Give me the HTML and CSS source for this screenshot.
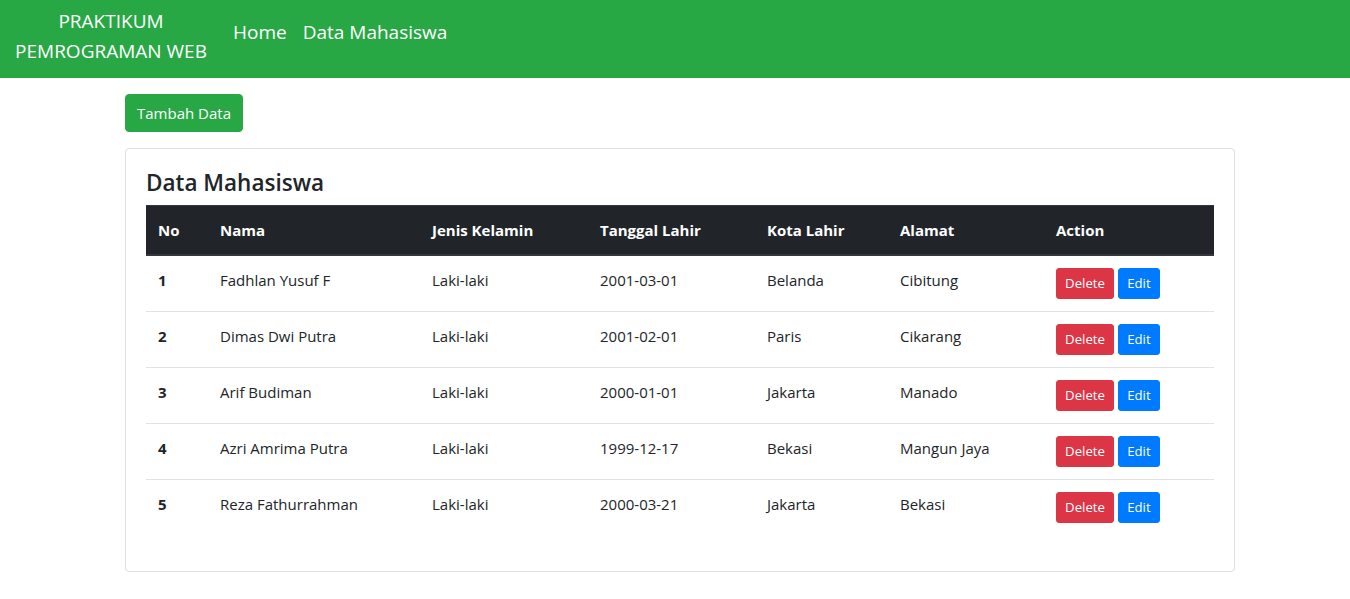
FILE: index.html
```html
<!DOCTYPE html>
<html lang="id">
<head>
<meta charset="utf-8">
<title>Data Mahasiswa</title>
<link rel="stylesheet" href="styles.css">
</head>
<body>
<nav class="navbar">
  <a class="brand" href="#">PRAKTIKUM<br>PEMROGRAMAN WEB</a>
  <ul class="nav-links">
    <li><a href="#">Home</a></li>
    <li><a href="#">Data Mahasiswa</a></li>
  </ul>
</nav>
<main class="main">
  <a class="btn btn-success btn-add" href="#">Tambah Data</a>
  <section class="card">
    <h4 class="card-title">Data Mahasiswa</h4>
    <table class="table">
      <colgroup>
        <col class="c-no"><col class="c-nama"><col class="c-jk"><col class="c-tgl"><col class="c-kota"><col class="c-alamat"><col class="c-action">
      </colgroup>
      <thead>
        <tr><th>No</th><th>Nama</th><th>Jenis Kelamin</th><th>Tanggal Lahir</th><th>Kota Lahir</th><th>Alamat</th><th>Action</th></tr>
      </thead>
      <tbody>
        <tr><th>1</th><td>Fadhlan Yusuf F</td><td>Laki-laki</td><td>2001-03-01</td><td>Belanda</td><td>Cibitung</td><td><a class="btn-sm btn-danger" href="#">Delete</a> <a class="btn-sm btn-primary" href="#">Edit</a></td></tr>
        <tr><th>2</th><td>Dimas Dwi Putra</td><td>Laki-laki</td><td>2001-02-01</td><td>Paris</td><td>Cikarang</td><td><a class="btn-sm btn-danger" href="#">Delete</a> <a class="btn-sm btn-primary" href="#">Edit</a></td></tr>
        <tr><th>3</th><td>Arif Budiman</td><td>Laki-laki</td><td>2000-01-01</td><td>Jakarta</td><td>Manado</td><td><a class="btn-sm btn-danger" href="#">Delete</a> <a class="btn-sm btn-primary" href="#">Edit</a></td></tr>
        <tr><th>4</th><td>Azri Amrima Putra</td><td>Laki-laki</td><td>1999-12-17</td><td>Bekasi</td><td>Mangun Jaya</td><td><a class="btn-sm btn-danger" href="#">Delete</a> <a class="btn-sm btn-primary" href="#">Edit</a></td></tr>
        <tr><th>5</th><td>Reza Fathurrahman</td><td>Laki-laki</td><td>2000-03-21</td><td>Jakarta</td><td>Bekasi</td><td><a class="btn-sm btn-danger" href="#">Delete</a> <a class="btn-sm btn-primary" href="#">Edit</a></td></tr>
      </tbody>
    </table>
  </section>
</main>
</body>
</html>
```

FILE: styles.css
```css
* { box-sizing: border-box; }

body {
  margin: 0;
  font-family: "Open Sans", "Noto Sans", sans-serif;
  font-size: 15px;
  line-height: 24px;
  color: #212529;
  background: #fff;
}

a { text-decoration: none; }

.navbar {
  display: flex;
  align-items: flex-start;
  height: 78px;
  background: #28a745;
  padding-left: 13px;
}

.brand {
  display: block;
  width: 196px;
  margin-right: 16px;
  padding-top: 6px;
  text-align: center;
  color: #fff;
  font-size: 19px;
  line-height: 30px;
}

.nav-links {
  display: flex;
  list-style: none;
  margin: 0;
  padding: 17px 0 0;
}

.nav-links a {
  display: block;
  padding: 0 8px;
  color: #fff;
  font-size: 19px;
  line-height: 30px;
}

.main {
  width: 1120px;
  margin: 0 auto;
  padding: 16px 0 0 10px;
}

.btn {
  display: inline-block;
  border: 1px solid transparent;
  border-radius: 4px;
  color: #fff;
  text-align: center;
}

.btn-success {
  background: #28a745;
  border-color: #28a745;
}

.btn-add {
  width: 118px;
  height: 38px;
  padding: 6px 0;
  font-size: 15px;
  line-height: 24px;
}

.card {
  margin-top: 16px;
  border: 1px solid rgba(0, 0, 0, 0.125);
  border-radius: 4px;
  padding: 20px;
}

.card-title {
  margin: 0 0 8px;
  font-size: 22.5px;
  font-weight: 600;
  line-height: 28px;
}

.table {
  width: 100%;
  table-layout: fixed;
  border-collapse: collapse;
  margin-bottom: 16px;
}

.c-no { width: 62px; }
.c-nama { width: 212px; }
.c-jk { width: 168px; }
.c-tgl { width: 167px; }
.c-kota { width: 133px; }
.c-alamat { width: 156px; }
.c-action { width: 170px; }

.table th,
.table td {
  padding: 12px;
  text-align: left;
  vertical-align: top;
  border-top: 1px solid #dee2e6;
  white-space: nowrap;
}

.table thead th {
  background: #212529;
  color: #fff;
  font-weight: 700;
  border-top: 1px solid #32383e;
  border-bottom: 2px solid #32383e;
}

.table tbody th {
  font-weight: 700;
}

.btn-sm {
  display: inline-block;
  height: 31px;
  padding: 4px 0;
  border: 1px solid transparent;
  border-radius: 3px;
  color: #fff;
  font-size: 13.2px;
  line-height: 21px;
  text-align: center;
}

.btn-danger {
  width: 58px;
  background: #dc3545;
  border-color: #dc3545;
}

.btn-primary {
  width: 42px;
  background: #007bff;
  border-color: #007bff;
}
```
